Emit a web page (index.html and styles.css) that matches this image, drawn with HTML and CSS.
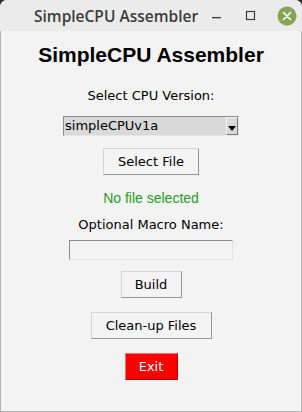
FILE: index.html
```html
<html lang="en">
<head>
    <meta charset="UTF-8">
    <meta name="viewport" content="width=device-width, initial-scale=1.0">
    <title>SimpleCPU Assembler</title>
    <link rel="stylesheet" href="styles.css">
</head>
<body>

    <div class="window">
        <!-- title bar -->
        <div class="titlebar">
            <span class="title">SimpleCPU Assembler</span>
            <div class="controls">
                <svg class="ctl" width="12" height="12" viewBox="0 0 12 12"><rect x="1" y="7" width="9" height="1.3" fill="#3c3c3c"/></svg>
                <svg class="ctl" width="12" height="12" viewBox="0 0 12 12"><rect x="1.5" y="1.5" width="8" height="8" fill="none" stroke="#3c3c3c" stroke-width="1.2"/></svg>
                <svg class="close" width="20" height="20" viewBox="0 0 20 20">
                    <circle cx="10" cy="10" r="9.5" fill="#87a556"/>
                    <path d="M6.5 6.5 L13.5 13.5 M13.5 6.5 L6.5 13.5" stroke="#ffffff" stroke-width="1.6" stroke-linecap="round"/>
                </svg>
            </div>
        </div>

        <!-- app -->
        <div class="content">
            <h1>SimpleCPU Assembler</h1>
            <div class="label first">Select CPU Version:</div>
            <div class="combo">
                <span class="combo-text">simpleCPUv1a</span>
                <span class="combo-arrow">
                    <svg width="8" height="5" viewBox="0 0 8 5"><path d="M0 0 L8 0 L4 5 Z" fill="#000"/></svg>
                </span>
            </div>
            <button class="btn" id="selbut">Select File</button>
            <div class="status">No file selected</div>
            <div class="label second">Optional Macro Name:</div>
            <input type="text" class="entry" id="macro">
            <button class="btn" id="build">Build</button>
            <button class="btn" id="clean">Clean-up Files</button>
            <button class="btn exit" id="exit">Exit</button>
        </div>
    </div>

</body>
</html>
```

FILE: styles.css
```css
html, body {
    margin: 0;
    padding: 0;
    background: #2e2e2e;
}

* {
    box-sizing: border-box;
}

.window {
    width: 302px;
    height: 412px;
    display: flex;
    flex-direction: column;
    background: #f3f3f3;
    border-radius: 7px 7px 0 0;
    overflow: hidden;
}

.titlebar {
    height: 31px;
    flex: none;
    display: flex;
    align-items: center;
    background: #ebebeb;
    padding-left: 34px;
}

.title {
    font-family: "Open Sans", sans-serif;
    font-weight: 600;
    font-size: 15.5px;
    color: #3c3c3c;
}

.controls {
    margin-left: auto;
    display: flex;
    align-items: center;
    gap: 22px;
    padding-right: 5px;
}

.close {
    margin-left: -2px;
}

.content {
    flex: 1;
    display: flex;
    flex-direction: column;
    align-items: center;
    border: 1px solid #b4b4b4;
    border-top: none;
    font-family: "DejaVu Sans", sans-serif;
    font-size: 13px;
    color: #000;
}

h1 {
    font-family: "Liberation Sans", Arial, sans-serif;
    font-weight: bold;
    font-size: 21px;
    line-height: 24px;
    height: 24px;
    margin: 12px 0 0 0;
}

.label {
    line-height: 16px;
    height: 16px;
}

.label.first {
    margin-top: 21px;
}

.label.second {
    margin-top: 11px;
}

.combo {
    margin-top: 12px;
    width: 176px;
    height: 20px;
    display: flex;
    align-items: stretch;
    background: #d9d9d9;
    border: 1px solid;
    border-color: #8c8c8c #e6e6e6 #e6e6e6 #8c8c8c;
}

.combo-text {
    flex: 1;
    line-height: 18px;
    padding-left: 1px;
}

.combo-arrow {
    width: 12px;
    display: flex;
    align-items: flex-end;
    justify-content: center;
    padding-bottom: 3px;
    border: 1px solid;
    border-color: #f4f4f4 #7a7a7a #7a7a7a #f4f4f4;
}

.btn {
    font-family: "DejaVu Sans", sans-serif;
    font-size: 13px;
    color: #000;
    height: 27px;
    padding: 0 12px;
    background: #f4f4f4;
    border: 1px solid;
    border-color: #d6d6d6 #969696 #969696 #d6d6d6;
    border-radius: 0;
}

#selbut {
    margin-top: 12px;
    width: 96px;
}

.status {
    margin-top: 15px;
    font-family: "Liberation Sans", Arial, sans-serif;
    font-size: 14px;
    line-height: 16px;
    height: 16px;
    color: #1e9e1e;
}

.entry {
    margin-top: 7px;
    width: 164px;
    height: 20px;
    background: #f4f4f4;
    border: 1px solid;
    border-color: #8c8c8c #e2e2e2 #e2e2e2 #8c8c8c;
    outline: none;
}

#build {
    margin-top: 11px;
    width: 61px;
}

#clean {
    margin-top: 14px;
    width: 121px;
}

.exit {
    margin-top: 14px;
    width: 53px;
    background: #ff0000;
    color: #ffffff;
    border-color: #ff7070 #b00000 #b00000 #ff7070;
}
```
